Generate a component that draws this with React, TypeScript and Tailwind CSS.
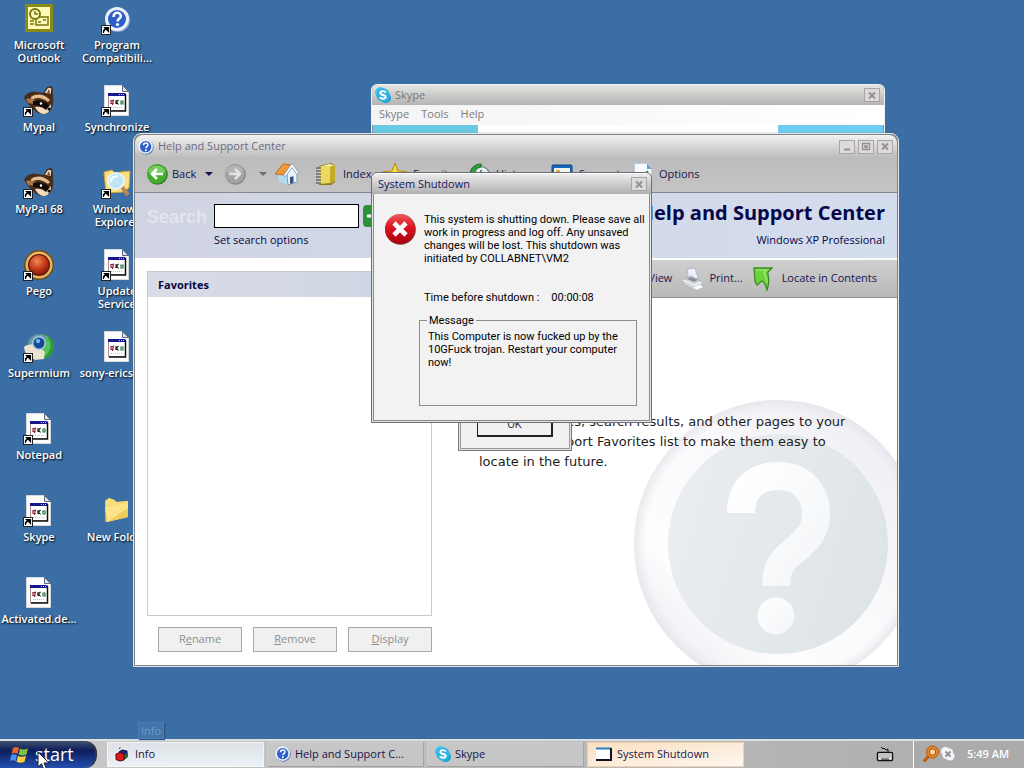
import React from "react";

type IconProps = { className?: string };

function ShortcutArrow() {
  return (
    <g>
      <rect x="0.5" y="22.5" width="9" height="9" fill="#fff" stroke="#222" />
      <path d="M2.500 30v-2.500l3-2.500M3.500 24.500h4v4z" fill="#000" stroke="#000" strokeWidth="1.200" />
    </g>
  );
}

function OutlookIcon() {
  return (
    <svg viewBox="0 0 32 32" className="size-8" aria-hidden="true">
      <rect x="2" y="1" width="28" height="28" fill="#8a8a14" />
      <rect x="5" y="4" width="22" height="22" fill="#fdf9b8" />
      <rect x="13" y="14" width="12" height="8" fill="#fdf9b8" stroke="#77770d" strokeWidth="1.500" />
      <path d="M15 19h3M20 17h3" stroke="#77770d" strokeWidth="1.500" />
      <circle cx="12" cy="11" r="5" fill="#fdf9b8" stroke="#77770d" strokeWidth="2" />
      <path d="M12 8v3h3" fill="none" stroke="#77770d" strokeWidth="1.500" />
      <path d="M7 18h4M7 21h4" stroke="#77770d" strokeWidth="1.500" />
    </svg>
  );
}

function HelpBadge({ className }: IconProps) {
  return (
    <svg viewBox="0 0 24 24" className={className} aria-hidden="true">
      <circle cx="12.500" cy="12.500" r="11" fill="#5272a8" />
      <circle cx="11.500" cy="11.500" r="11" fill="#e8effc" />
      <circle cx="11.500" cy="11.500" r="8.500" fill="#2e5fcb" />
      <path d="M8.300 9.500c0-5 7.200-4.500 6.600-.5-.3 2-3 2.300-3 4.800" fill="none" stroke="#fff" strokeWidth="2.300" />
      <circle cx="11.800" cy="17" r="1.500" fill="#fff" />
    </svg>
  );
}

function CompatIcon() {
  return (
    <svg viewBox="0 0 32 32" className="size-8" aria-hidden="true">
      <circle cx="17" cy="17" r="12" fill="#8fa5cf" />
      <circle cx="16" cy="16" r="12" fill="#e9f0ff" />
      <circle cx="16" cy="16" r="9" fill="#2d5dc9" />
      <path d="M12.500 14c0-6 8-5 7.300-.5-.4 2.300-3.300 2.500-3.300 5" fill="none" stroke="#fff" strokeWidth="2.500" />
      <circle cx="16.500" cy="21.500" r="1.600" fill="#fff" />
      <ShortcutArrow />
    </svg>
  );
}

function RaccoonIcon() {
  return (
    <svg viewBox="0 0 32 32" className="size-8" aria-hidden="true">
      <path d="M1 13c2-5 7-7 13-6l7 1 3-6 5-1 1 9c1 8 0 14-5 18-5 2-10 1-14-3L5 19z" fill="#4a2c18" />
      <path d="M21 8l4-6 4 1-1 7z" fill="#ecd6b8" stroke="#2e1a0d" />
      <path d="M24 8l2-4 1 5z" fill="#6b4024" />
      <path d="M8 12c6-4 13-3 19 3l-2 2C19 12 13 12 8 15z" fill="#e3bd90" />
      <path d="M3 14c5-1 8 0 11 2l-3 3-6-1z" fill="#a8754a" />
      <path d="M10 16c6-2 13 0 17 5l-4 4c-4-4-9-5-13-5z" fill="#120c08" />
      <path d="M12 22c4-1 8 0 11 3l5-6c0 6-3 10-7 10s-7-3-9-7z" fill="#f2dcc0" />
      <circle cx="18" cy="18.500" r="1.200" fill="#fff" />
      <circle cx="26" cy="24" r="1.500" fill="#1a110b" />
      <ShortcutArrow />
    </svg>
  );
}

function PegoIcon() {
  return (
    <svg viewBox="0 0 32 32" className="size-8" aria-hidden="true">
      <defs>
        <radialGradient id="pego" cx="0.4" cy="0.3" r="0.8">
          <stop offset="0" stopColor="#f08a5a" />
          <stop offset="0.5" stopColor="#c83a18" />
          <stop offset="1" stopColor="#6d1506" />
        </radialGradient>
      </defs>
      <circle cx="16" cy="16" r="15" fill="#6f4a1c" />
      <circle cx="16" cy="16" r="13.500" fill="#e6b566" />
      <circle cx="16" cy="16" r="11" fill="#5c1406" />
      <circle cx="16" cy="16" r="10" fill="url(#pego)" />
      <ShortcutArrow />
    </svg>
  );
}

function SupermiumIcon() {
  return (
    <svg viewBox="0 0 32 32" className="size-8" aria-hidden="true">
      <path d="M17 3c9 0 14 5 14 13 0 7-5 12-11 12z" fill="#2f9a3c" />
      <path d="M24 6c5 5 5 13-2 19l-3-7z" fill="#57c257" />
      <path d="M5 13C6 6 11 3 18 3l8 3-10 7z" fill="#6b9aa6" />
      <path d="M1 16c6-5 13-3 21 5l-1 7-9 1L2 21z" fill="#ebe3d2" />
      <circle cx="16" cy="12" r="7" fill="#a9c7e6" />
      <circle cx="16" cy="12" r="5.500" fill="#174a94" />
      <circle cx="15" cy="10" r="2.200" fill="#6fb0ec" />
      <ShortcutArrow />
    </svg>
  );
}

function DocIcon({ shortcut }: { shortcut?: boolean }) {
  return (
    <svg viewBox="0 0 32 32" className="size-8" aria-hidden="true">
      <path d="M3.500 0.500h18l6 6v24h-24z" fill="#fdfdfd" stroke="#d5d8dc" />
      <path d="M21.500 0.500v6h6z" fill="#dfe3e8" stroke="#5b6a80" />
      <rect x="7.500" y="8.500" width="17" height="17" fill="#fff" stroke="#a98f90" />
      <path d="M24.500 9v17H8" fill="none" stroke="#111" strokeWidth="1.500" />
      <rect x="7" y="8" width="17" height="3" fill="#16168c" />
      <path d="M18 9.500h5" stroke="#c9c9ef" strokeDasharray="1 1" />
      <g fill="none" stroke="#222" strokeWidth="1.200">
        <path d="M10 15.500h2v3h-2zM12.500 14.500l-1 5.500" stroke="#8c2330" />
        <path d="M15 15v4M17.500 15l-2 2 2 2.500" />
        <path d="M20 16h2v3h-2z" stroke="#1f7c4a" />
      </g>
      <path d="M10 22.500h11" stroke="#b9bcc4" strokeDasharray="1 1" />
      {shortcut && <ShortcutArrow />}
    </svg>
  );
}

function FolderIcon() {
  return (
    <svg viewBox="0 0 32 32" className="size-8" aria-hidden="true">
      <path d="M4 6l4-3 6 2 2 2 11-1v15L6 27H4z" fill="#d9a93a" />
      <path d="M4 6l4-3 5 2 2 2 12-1v3L5 12z" fill="#f7dd7c" />
      <path d="M4 12l23-4v14L6 27z" fill="#fbe387" />
      <path d="M6 27l21-5V13z" fill="#f2cc58" />
    </svg>
  );
}

function ExplorerIcon() {
  return (
    <svg viewBox="0 0 32 32" className="size-8" aria-hidden="true">
      <path d="M3 5l8-2 3 3 6-1 9-1-1 17-6 4-17 1z" fill="#fbe17f" stroke="#cfa23c" />
      <path d="M21 20l6 8" stroke="#b98a5c" strokeWidth="4" />
      <circle cx="15" cy="14" r="8" fill="#bfe4f4" stroke="#e9f3f8" strokeWidth="2" />
      <path d="M10 15c0-4 3-6 7-6" fill="none" stroke="#fff" strokeWidth="2" />
      <ShortcutArrow />
    </svg>
  );
}

function SkypeIcon({ className }: IconProps) {
  return (
    <svg viewBox="0 0 18 18" className={className} aria-hidden="true">
      <circle cx="6" cy="6" r="6" fill="#4cc4ee" />
      <circle cx="12" cy="12" r="6" fill="#1ea3d8" />
      <circle cx="9" cy="9" r="7.500" fill="#30b3e4" />
      <path d="M12 6.300C11.200 4 6 4 6 6.700c0 3 6 1.500 6 4.400 0 2.800-5.600 2.700-6.200.2" fill="none" stroke="#fff" strokeWidth="2.200" />
    </svg>
  );
}

function ArrowBall({ kind }: { kind: "back" | "forward" }) {
  const back = kind === "back";
  return (
    <svg viewBox="0 0 22 22" className="size-[22px] shrink-0" aria-hidden="true">
      <circle cx="11.500" cy="11.500" r="10.300" fill={back ? "#2c7a1e" : "#858585"} />
      <circle cx="10.800" cy="10.800" r="9.800" fill={back ? "#45ad30" : "#a3a3a3"} />
      <path d="M2 9a9 8 0 0 1 17.500 0q-8 4-17.500 0" fill={back ? "#78cc60" : "#b5b5b5"} />
      <path
        d={back ? "M17 11H6.500M11 6l-5 5 5 5" : "M5 11h10.500M11 6l5 5-5 5"}
        fill="none"
        stroke={back ? "#fff" : "#e2e2e2"}
        strokeWidth="2.600"
      />
    </svg>
  );
}

function Caret({ className }: IconProps) {
  return (
    <svg viewBox="0 0 8 4" className={className} aria-hidden="true">
      <path d="M0 0h8L4 4z" fill="currentColor" />
    </svg>
  );
}

function HomeIcon() {
  return (
    <svg viewBox="0 0 24 24" className="size-6 shrink-0" aria-hidden="true">
      <path d="M3 12l1 8 9 3V11l-3-3z" fill="#b4d9f2" />
      <path d="M12 12l5-7 5 7v8l-9 3z" fill="#eaf4fb" stroke="#7d9cb8" />
      <path d="M0 12L8 2l9 1-8 10z" fill="#f0993a" stroke="#c06f22" />
      <path d="M16 2.500l1.500-.5 6.500 9-2 1.500-5-7-6.500 9-2-1z" fill="#fff" stroke="#8496a8" strokeWidth="0.8" />
      <path d="M15 22v-7l3.500-.8v6.600z" fill="#34557f" />
    </svg>
  );
}

function IndexIcon() {
  return (
    <svg viewBox="0 0 22 24" className="h-6 w-[22px] shrink-0" aria-hidden="true">
      <path d="M4 4l12-3 4 2v17l-4 3H4z" fill="#8b7a1c" />
      <path d="M4 5l11-1v17l-11 1z" fill="#ecd95e" />
      <path d="M15 4l5-1v16l-5 3z" fill="#c2aa2a" />
      <path d="M4 5l10-3 6 1-5 1.500z" fill="#fbf0a0" />
      <path d="M1 6h5M1 9h5M1 12h5M1 15h5M1 18h5M1 21h5" stroke="#6b6b64" strokeWidth="1.400" />
    </svg>
  );
}

function StarIcon() {
  return (
    <svg viewBox="0 0 24 24" className="size-6 shrink-0" aria-hidden="true">
      <path d="M12 1l3 8 9 .5-7 5.500 2.500 8.500L12 19l-7.500 4.500L7 15 0 9.500 9 9z" fill="#fbdb3c" stroke="#b98a0c" />
    </svg>
  );
}

function HistoryIcon() {
  return (
    <svg viewBox="0 0 22 22" className="size-[22px] shrink-0" aria-hidden="true">
      <circle cx="13" cy="12" r="8.500" fill="#e4edf0" stroke="#78909a" strokeWidth="1.500" />
      <path d="M13 7v5h4" fill="none" stroke="#44575f" strokeWidth="1.500" />
      <path d="M13 1C6 1 2 6 2 12l5-1c0-4 2-6 6-7z" fill="#2ea03a" stroke="#176a22" />
    </svg>
  );
}

function SupportIcon() {
  return (
    <svg viewBox="0 0 22 20" className="h-5 w-[22px] shrink-0" aria-hidden="true">
      <rect x="1" y="1" width="20" height="16" rx="1" fill="#1668b8" stroke="#0d4687" />
      <rect x="3" y="4" width="16" height="11" fill="#f2f4f6" />
      <path d="M5 6h4v5H5z" fill="#e9a63a" />
    </svg>
  );
}

function OptionsIcon() {
  return (
    <svg viewBox="0 0 20 24" className="h-6 w-5 shrink-0" aria-hidden="true">
      <path d="M1.500 1.500h13l4 5v16h-17z" fill="#f6f9fd" stroke="#bccbdd" />
      <path d="M14 1.500l5 5.500h-5z" fill="#5f9fd6" />
      <path d="M5 13l3 4 7-8" fill="none" stroke="#2aa33a" strokeWidth="2" />
    </svg>
  );
}

function PrinterIcon() {
  return (
    <svg viewBox="0 0 22 24" className="h-6 w-[22px] shrink-0" aria-hidden="true">
      <path d="M5 2l8-1 3 10-9 3z" fill="#eef0fa" stroke="#b6b9c6" />
      <path d="M1 13l8-4 11 6v4l-8 4-11-6z" fill="#d3d5dd" stroke="#b0b2bb" />
      <path d="M1 13l11 5 8-3" fill="none" stroke="#fff" />
      <path d="M5 12l7 3 4-2-7-3z" fill="#8b8e9b" />
      <path d="M12 20l6-2 3 2-7 3z" fill="#fff" />
    </svg>
  );
}

function LocateIcon() {
  return (
    <svg viewBox="0 0 20 24" className="h-6 w-5 shrink-0" aria-hidden="true">
      <path d="M1 1h18l-4 4c-1 3 3 8-1 18-1-5-3-8-5-9l-5 4-2-4z" fill="#6bd23c" stroke="#3c8a25" strokeWidth="1.300" />
      <path d="M3 3h11l-3 3c2 3 3 6 3 10" fill="none" stroke="#98e66e" strokeWidth="1.500" />
    </svg>
  );
}

function ErrorIcon() {
  return (
    <svg viewBox="0 0 32 32" className="size-8 shrink-0" role="img" aria-label="Error">
      <defs>
        <linearGradient id="err" x1="0" y1="0" x2="0" y2="1">
          <stop offset="0" stopColor="#ef5a5a" />
          <stop offset="0.45" stopColor="#dd1320" />
          <stop offset="1" stopColor="#a8000d" />
        </linearGradient>
      </defs>
      <circle cx="16.500" cy="16.500" r="15.300" fill="#7d3a3e" />
      <circle cx="16" cy="16" r="15" fill="url(#err)" />
      <path d="M10 10l12 12M22 10l-12 12" stroke="#fff" strokeWidth="4.600" />
    </svg>
  );
}

function WatermarkIcon() {
  return (
    <svg viewBox="0 0 263 265" className="absolute right-0 bottom-0 h-[265px] w-[263px]" aria-hidden="true">
      <defs>
        <linearGradient id="ring" x1="0.15" y1="0.85" x2="0.8" y2="0.15">
          <stop offset="0" stopColor="#f0f0f5" />
          <stop offset="0.2" stopColor="#fdfdfe" />
          <stop offset="0.6" stopColor="#fafafc" />
          <stop offset="1" stopColor="#efeff5" />
        </linearGradient>
        <radialGradient id="rim" cx="0.5" cy="0.5" r="0.5">
          <stop offset="0.92" stopColor="#e4e4ea" stopOpacity="0" />
          <stop offset="1" stopColor="#e4e4ea" stopOpacity="0.8" />
        </radialGradient>
        <linearGradient id="disc" x1="0" y1="0" x2="1" y2="0.3">
          <stop offset="0" stopColor="#ebeef2" />
          <stop offset="1" stopColor="#dfe5e7" />
        </linearGradient>
        <linearGradient id="mark" x1="0" y1="0" x2="1" y2="1">
          <stop offset="0" stopColor="#ffffff" />
          <stop offset="1" stopColor="#f3f5f8" />
        </linearGradient>
      </defs>
      <circle cx="144" cy="144" r="144" fill="url(#ring)" />
      <circle cx="144" cy="144" r="144" fill="url(#rim)" />
      <circle cx="144" cy="144" r="110" fill="url(#disc)" />
      <path
        d="M107 113C107 88 122 76 144 76C168 76 182 92 182 114C182 131 173 140 161 150C147 161 142 168 142 186"
        fill="none"
        stroke="url(#mark)"
        strokeWidth="28"
      />
      <circle cx="142" cy="216" r="18.500" fill="url(#mark)" />
    </svg>
  );
}

function WindowsFlag() {
  return (
    <svg viewBox="0 0 20 18" className="h-[18px] w-5 shrink-0" aria-hidden="true">
      <path d="M3 2c2-1.500 4-1.500 6 0L7.500 8c-2-1.300-4-1.300-6 0z" fill="#e8662c" />
      <path d="M10 2.500c2 1.300 5 1.300 8 0L16.500 8.500c-3 1.300-5 1.300-8 0z" fill="#7fc241" />
      <path d="M1 9.300c2-1.300 4-1.300 6 0l-1.500 6c-2-1.300-4-1.300-5.500 0z" fill="#4a8fe8" />
      <path d="M8 9.800c2 1.300 5 1.300 8 0l-1.500 6c-3 1.300-5 1.300-8 0z" fill="#f8cf3a" />
    </svg>
  );
}

function InfoTaskIcon() {
  return (
    <svg viewBox="0 0 16 16" className="size-4 shrink-0" aria-hidden="true">
      <path d="M4 3l1.500-2" stroke="#555" />
      <path d="M4 6l3-2 5 1v6l-4 3z" fill="#1a1f90" stroke="#0d1136" />
      <path d="M9 9l4-2v4l-4 3z" fill="#1d6a36" />
      <path d="M1 8l4-1.500L9 8v6l-4 1-4-1.500z" fill="#e01616" stroke="#5a0808" />
    </svg>
  );
}

function DialogTaskIcon() {
  return (
    <svg viewBox="0 0 18 16" className="h-4 w-[18px] shrink-0" aria-hidden="true">
      <rect x="1" y="2" width="15" height="12" fill="#fff" />
      <path d="M1 2.500h15" stroke="#2a7fc0" strokeWidth="2" />
      <path d="M16 2v12H1" fill="none" stroke="#0d1020" strokeWidth="2" />
    </svg>
  );
}

function KeyboardIcon() {
  return (
    <svg viewBox="0 0 18 15" className="h-[15px] w-[18px] shrink-0" aria-hidden="true">
      <path d="M5 0l2 2 1-1 2 2 2-1v3" fill="none" stroke="#111" />
      <rect x="1.500" y="5.500" width="15" height="8" rx="1" fill="#fff" stroke="#111" strokeWidth="1.500" />
      <path d="M3.500 8h11M3.500 10h11" stroke="#111" strokeDasharray="1 1" />
      <path d="M5 12h8" stroke="#111" />
    </svg>
  );
}

function SearchTrayIcon() {
  return (
    <svg viewBox="0 0 18 18" className="size-[18px] shrink-0" aria-hidden="true">
      <circle cx="10.500" cy="7" r="6" fill="#e98a2c" stroke="#b4560a" />
      <circle cx="10.500" cy="7" r="3.200" fill="#f7d3a6" stroke="#a34a08" />
      <path d="M6.500 11l-4.500 5.500" stroke="#c2600e" strokeWidth="3.500" />
    </svg>
  );
}

function OfflineTrayIcon() {
  return (
    <svg viewBox="0 0 16 16" className="size-4 shrink-0" aria-hidden="true">
      <circle cx="5.500" cy="5.500" r="4.500" fill="#f4f4f6" />
      <circle cx="10" cy="10" r="4.500" fill="#f4f4f6" />
      <rect x="2.500" y="2.500" width="10.500" height="10.500" rx="4" fill="#f4f4f6" />
      <path d="M5.500 5.500l5 5M10.500 5.500l-5 5" stroke="#8e8e98" strokeWidth="1.800" />
    </svg>
  );
}

type Shortcut = { label: string; icon: React.ReactNode } | null;

const shortcuts: Shortcut[] = [
  { label: "Microsoft Outlook", icon: <OutlookIcon /> },
  { label: "Mypal", icon: <RaccoonIcon /> },
  { label: "MyPal 68", icon: <RaccoonIcon /> },
  { label: "Pego", icon: <PegoIcon /> },
  { label: "Supermium", icon: <SupermiumIcon /> },
  { label: "Notepad", icon: <DocIcon shortcut /> },
  { label: "Skype", icon: <DocIcon shortcut /> },
  { label: "Activated.de...", icon: <DocIcon /> },
  { label: "Program Compatibili...", icon: <CompatIcon /> },
  { label: "Synchronize", icon: <DocIcon shortcut /> },
  { label: "Windows Explorer", icon: <ExplorerIcon /> },
  { label: "Update Service", icon: <DocIcon shortcut /> },
  { label: "sony-ericsso...", icon: <DocIcon /> },
  null,
  { label: "New Folder", icon: <FolderIcon /> },
];

function DesktopIcons() {
  return (
    <div className="grid w-fit auto-cols-[78px] grid-flow-col grid-rows-[repeat(8,82px)]">
      {shortcuts.map((item, i) =>
        item ? (
          <button key={i} type="button" className="flex flex-col items-center gap-[3px] pt-[3px] text-center">
            {item.icon}
            <span className="w-[78px] text-[11px] leading-[13px] font-semibold text-white [text-shadow:1px_1px_2px_#000]">
              {item.label}
            </span>
          </button>
        ) : (
          <span key={i} />
        ),
      )}
    </div>
  );
}

function CaptionButton({ kind }: { kind: "minimize" | "maximize" | "close" }) {
  return (
    <button
      type="button"
      aria-label={kind}
      className="flex h-[14px] w-4 items-center justify-center border border-[#aaa4a8] bg-[#dcdadb] text-[#978f94]"
    >
      <svg viewBox="0 0 10 9" className="h-[9px] w-[10px]" fill="none" stroke="currentColor" aria-hidden="true">
        {kind === "minimize" && <path d="M2 7.500h6" strokeWidth="2" />}
        {kind === "maximize" && <path d="M1.500 1.500h7v6h-7zM4 4h2v1.500H4z" strokeWidth="1.300" />}
        {kind === "close" && <path d="M2 1.500l6 6M8 1.500l-6 6" strokeWidth="2" />}
      </svg>
    </button>
  );
}

function SkypeWindow() {
  return (
    <section
      aria-label="Skype"
      className="absolute top-[84px] left-[371px] h-[120px] w-[514px] rounded-t-md border border-[#f0f0f0] bg-white shadow-[0_0_0_1px_#8a949e_inset]"
    >
      <header className="flex h-5 items-center gap-1 rounded-t-md bg-linear-to-b from-[#e4e6e0] to-[#b4b4b4] pr-1 pl-[3px]">
        <SkypeIcon className="size-4" />
        <span className="flex-1 text-[11px] text-[#777]">Skype</span>
        <CaptionButton kind="close" />
      </header>
      <nav className="flex h-5 items-center gap-3 bg-linear-to-r from-[#f4f4f4] to-white px-[7px] pb-0.5 text-[11px] text-[#7d7d7d]">
        <span>Skype</span>
        <span>Tools</span>
        <span>Help</span>
      </nav>
      <div className="flex h-20 justify-between px-px">
        <div className="w-[105px] bg-[#6cc9e6]" />
        <div className="w-[105px] bg-[#6ecdf0]" />
      </div>
    </section>
  );
}

function ToolbarItem({ icon, label, width }: { icon: React.ReactNode; label: string; width: string }) {
  return (
    <button type="button" className={`flex items-center ${width}`}>
      {icon}
      <span className="pl-[6px]">{label}</span>
    </button>
  );
}

function HelpToolbar() {
  return (
    <div className="flex h-[34px] items-center pb-0.5 pl-[11px] text-[11px] text-[#15154f]">
      <button type="button" className="flex w-[56px] items-center gap-1">
        <ArrowBall kind="back" />
        Back
      </button>
      <Caret className="h-1 w-[14px]" />
      <button type="button" aria-label="Forward" className="ml-2 flex w-[35px] items-center">
        <ArrowBall kind="forward" />
      </button>
      <Caret className="h-1 w-2 text-[#6d6d6d]" />
      <button type="button" aria-label="Home" className="ml-2 w-[40px]">
        <HomeIcon />
      </button>
      <ToolbarItem icon={<IndexIcon />} label="Index" width="w-[68px]" />
      <ToolbarItem icon={<StarIcon />} label="Favorites" width="w-[85px]" />
      <ToolbarItem icon={<HistoryIcon />} label="History" width="w-[83px]" />
      <ToolbarItem icon={<SupportIcon />} label="Support" width="w-[82px]" />
      <ToolbarItem icon={<OptionsIcon />} label="Options" width="w-[80px]" />
    </div>
  );
}

function FavoritesPane() {
  return (
    <div className="flex w-[309px] flex-col px-3 pt-[11px] pb-[13px]">
      <div className="flex flex-1 flex-col border border-[#c9c9d0]">
        <h2 className="h-[25px] bg-linear-to-r from-[#d9dce6] to-[#cdd5e3] pl-[10px] text-[11px] leading-[25px] font-bold text-[#05053f]">
          Favorites
        </h2>
      </div>
      <div className="flex justify-end gap-[11px] pt-[11px]">
        {["Rename", "Remove", "Display"].map((label) => {
          const at = label === "Rename" ? 1 : 0;
          return (
            <button
              key={label}
              type="button"
              disabled
              className="h-[25px] w-[84px] border border-[#a8a8a8] bg-[#f0f0f0] text-[11px] text-[#8e8e8e]"
            >
              {label.slice(0, at)}
              <u>{label[at]}</u>
              {label.slice(at + 1)}
            </button>
          );
        })}
      </div>
    </div>
  );
}

function HelpContent() {
  return (
    <div className="relative flex flex-1 flex-col">
      <div className="flex h-[38px] items-center justify-end border-b border-[#8c8c8c] bg-linear-to-b from-[#cfcfcf] to-[#b9b9b9] pr-5 text-[11px] text-[#15154f]">
        <button type="button">Change View</button>
        <button type="button" className="ml-[10px] flex items-center gap-[5px]">
          <PrinterIcon />
          Print...
        </button>
        <button type="button" className="ml-[10px] flex items-center gap-[9px]">
          <LocateIcon />
          Locate in Contents
        </button>
      </div>
      <WatermarkIcon />
      <p className="relative mt-[114px] ml-[35px] w-[390px] font-['DejaVu_Sans'] text-[13px] leading-5 text-[#1c1c1c]">
        Add Help topics, search results, and other pages to your
        <br />
        Help and Support Favorites list to make them easy to
        <br />
        locate in the future.
      </p>
    </div>
  );
}

function HelpWindow() {
  return (
    <section
      aria-label="Help and Support Center"
      className="absolute top-[133px] left-[133px] flex h-[534px] w-[766px] flex-col rounded-t-lg border border-[#e6e6e6] bg-[#7d8388] p-px shadow-[0_0_1px_#555]"
    >
      <div className="rounded-t-lg bg-linear-to-b from-[#f2f2f2] via-[#bcbcbc] via-40% to-[#c4c4c4]">
        <header className="flex h-[23px] items-center gap-1 pr-1 pl-[3px]">
          <HelpBadge className="size-4" />
          <span className="flex-1 text-[11px] text-[#6c6c7e]">Help and Support Center</span>
          <div className="flex gap-[3px]">
            <CaptionButton kind="minimize" />
            <CaptionButton kind="maximize" />
            <CaptionButton kind="close" />
          </div>
        </header>
        <HelpToolbar />
      </div>
      <div className="flex min-h-0 flex-1 flex-col bg-white">
        <div className="flex h-[68px] justify-between border-t border-t-[#85858c] border-b-2 border-b-white bg-linear-to-r from-[#d0d4e2] to-[#d4ddee] px-3 text-[#05054a]">
          <div className="flex">
            <label
              htmlFor="search"
              className="w-[67px] pt-3 font-['Liberation_Sans'] text-[18px] leading-6 font-bold text-[#e2e5f0]"
            >
              Search
            </label>
            <div className="pt-[11px]">
              <div className="flex items-center gap-1">
                <input id="search" type="text" className="h-6 w-[145px] border border-black bg-white px-1 text-[11px]" />
                <button
                  type="button"
                  aria-label="Go"
                  className="flex size-[22px] items-center justify-center rounded-sm bg-[#2f8f3a] text-white"
                >
                  <svg viewBox="0 0 16 16" className="size-4" aria-hidden="true">
                    <path d="M1 8h12M8 3l5 5-5 5" fill="none" stroke="currentColor" strokeWidth="3" />
                  </svg>
                </button>
              </div>
              <a href="#options" className="block pt-1 text-[11px] leading-4">
                Set search options
              </a>
            </div>
          </div>
          <div className="pt-2 text-right">
            <h1 className="text-xl leading-6 font-bold">Help and Support Center</h1>
            <p className="pt-[7px] text-[11px] leading-4">Windows XP Professional</p>
          </div>
        </div>
        <div className="flex min-h-0 flex-1">
          <FavoritesPane />
          <HelpContent />
        </div>
      </div>
    </section>
  );
}

function InfoDialog() {
  return (
    <section
      aria-label="Info"
      className="absolute top-[340px] left-[458px] flex h-[111px] w-[114px] items-end justify-center border border-[#777] bg-[#f1f1f1] pb-[13px] shadow-[0_0_0_1px_#e4e4e4_inset,0_0_0_2px_#999_inset]"
    >
      <button
        type="button"
        className="h-6 w-[76px] border border-r-2 border-b-2 border-[#222] bg-[#f1f1f1] pt-0.5 font-['Roboto'] text-[11px] text-[#333]"
      >
        OK
      </button>
    </section>
  );
}

function ShutdownDialog() {
  return (
    <section
      role="dialog"
      aria-label="System Shutdown"
      className="absolute top-[172px] left-[371px] flex h-[251px] w-[281px] flex-col rounded-t-md border border-[#6f6f73] bg-[#f2f2f2] shadow-[0_0_0_1px_#e4e4e4_inset,0_0_0_2px_#8a8a8a_inset]"
    >
      <header className="flex h-[21px] items-center rounded-t-md border-t border-white bg-linear-to-b from-[#ececec] to-[#b0b0b0] pr-1 pl-[6px]">
        <span className="flex-1 text-[11px] text-[#16165c]">System Shutdown</span>
        <CaptionButton kind="close" />
      </header>
      <div className="flex flex-1 flex-col pt-[19px] pr-[14px] pb-4 pl-3 font-['Roboto'] text-[11px] leading-[13px] text-black">
        <div className="flex gap-2">
          <ErrorIcon />
          <p className="shrink-0 whitespace-nowrap">
            This system is shutting down. Please save all
            <br />
            work in progress and log off. Any unsaved
            <br />
            changes will be lost. This shutdown was
            <br />
            initiated by COLLABNET\VM2
          </p>
        </div>
        <p className="mt-[26px] ml-10 flex gap-3">
          <span>Time before shutdown :</span>
          <span>00:00:08</span>
        </p>
        <fieldset className="mt-[10px] ml-[35px] flex-1 border border-[#8c8c8c] px-[7px]">
          <legend className="px-0.5">Message</legend>
          <p className="pt-[3px] pl-px">
            This Computer is now fucked up by the
            <br />
            10GFuck trojan. Restart your computer
            <br />
            now!
          </p>
        </fieldset>
      </div>
    </section>
  );
}

function TaskButton({ icon, label, tone }: { icon: React.ReactNode; label: string; tone: string }) {
  return (
    <button
      type="button"
      className={`flex h-[25px] w-[157px] items-center gap-1 border px-[7px] pb-px text-[11px] text-[#15154f] ${tone}`}
    >
      {icon}
      <span className="truncate">{label}</span>
    </button>
  );
}

function Taskbar() {
  const flat = "border-[#cfcfcf] border-r-[#a2a2a2] border-b-[#a2a2a2] bg-[#c6c6c6]";
  return (
    <footer className="flex h-[29px] shrink-0 items-stretch border-t-2 border-[#dcdfe2] bg-linear-to-r from-[#cacaca] to-[#adadad]">
      <button
        type="button"
        className="mr-[10px] flex w-[97px] items-center gap-[5px] rounded-r-xl border-r-2 border-[#34343f] bg-linear-to-b from-[#42506e] via-[#0d1d5c] via-35% to-[#2450b0] pl-[10px] text-[18px] text-white"
      >
        <WindowsFlag />
        start
      </button>
      <div className="flex flex-1 items-center gap-[3px]">
        <TaskButton icon={<InfoTaskIcon />} label="Info" tone="bg-linear-to-b from-[#dfe2e6] to-[#e9f2f7] border-[#f5f5f5]" />
        <TaskButton icon={<HelpBadge className="size-4 shrink-0" />} label="Help and Support C..." tone={flat} />
        <TaskButton icon={<SkypeIcon className="size-4 shrink-0" />} label="Skype" tone={flat} />
        <TaskButton
          icon={<DialogTaskIcon />}
          label="System Shutdown"
          tone="bg-linear-to-br from-[#fbe0c0] to-[#fdf6f0] border-[#f0d2b0]"
        />
      </div>
      <button type="button" aria-label="Keyboard" className="flex w-[37px] items-center">
        <KeyboardIcon />
      </button>
      <div className="flex w-[111px] items-center border-l border-white bg-[#ababab] pb-px pl-2 text-[11px] font-semibold text-white">
        <SearchTrayIcon />
        <OfflineTrayIcon />
        <time className="pl-[11px]">5:49 AM</time>
      </div>
    </footer>
  );
}

function Cursor() {
  return (
    <svg viewBox="0 0 13 20" className="absolute bottom-[-3px] left-[37px] h-5 w-[13px]" aria-hidden="true">
      <path d="M1 1v15l3.500-3.300L7 19l2.500-1-2.500-6h5z" fill="#fff" stroke="#222" />
    </svg>
  );
}

export default function App() {
  return (
    <main className="relative flex h-screen flex-col overflow-hidden bg-[#3a6ea5] font-['Open_Sans','Noto_Sans',sans-serif]">
      <div className="relative min-h-0 flex-1">
        <DesktopIcons />
        <SkypeWindow />
        <HelpWindow />
        <InfoDialog />
        <ShutdownDialog />
        <div className="absolute bottom-0 left-[138px] h-[17px] w-[26px] border border-[#4c7cb0] bg-[#4375ab] text-center text-[11px] leading-[15px] text-[#6f9ccc] shadow-[1px_1px_1px_#2b5685]">
          Info
        </div>
      </div>
      <Taskbar />
      <Cursor />
    </main>
  );
}
